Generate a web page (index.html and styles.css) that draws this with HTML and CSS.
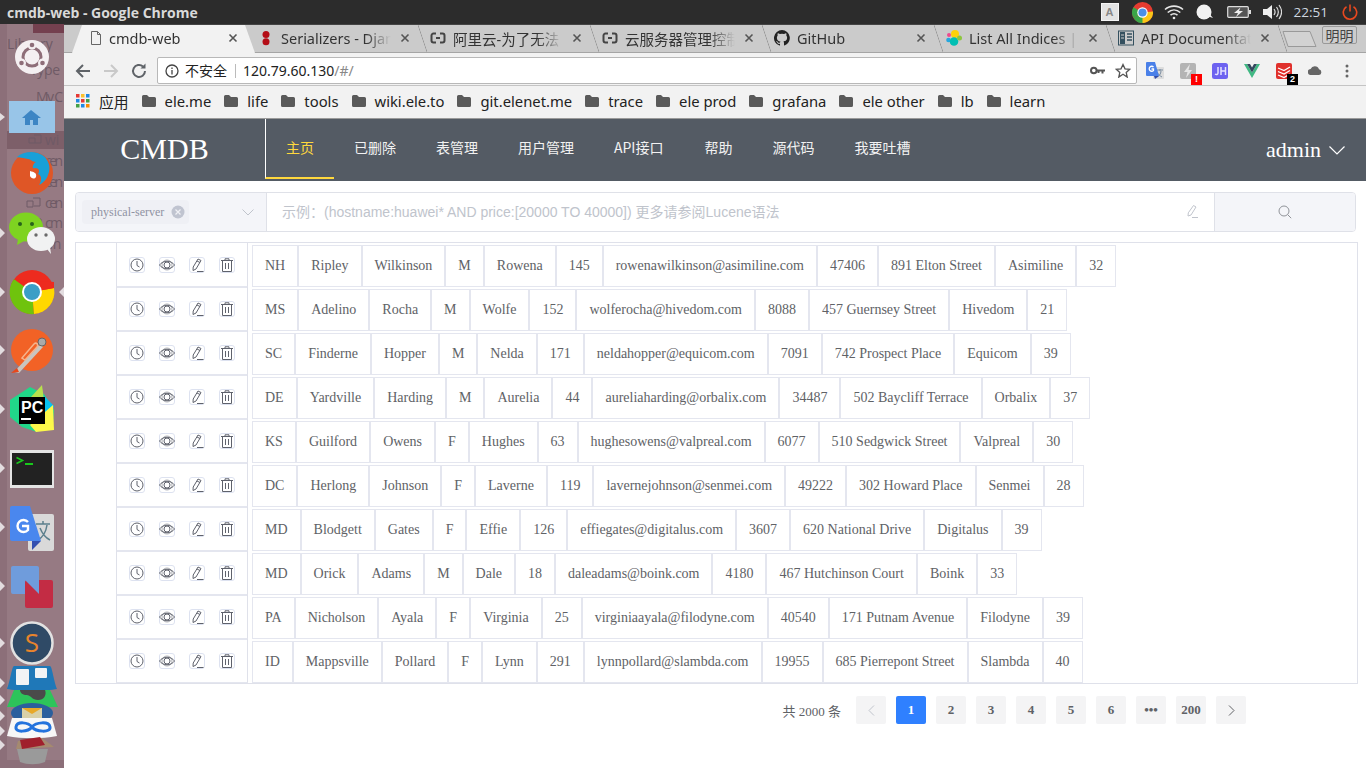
FILE: index.html
```html
<!DOCTYPE html>
<html lang="en">
<head>
    <meta charset="UTF-8">
    <meta name="viewport" content="width=device-width, initial-scale=1.0">
    <title>cmdb-web</title>
    <link rel="stylesheet" href="styles.css">
</head>
<body>
    <div class="panel">
        <div class="panel-title">cmdb-web - Google Chrome</div>
        <div class="tray">
            <span class="tray-a">A</span>
            <svg class="tray-chrome" width="21" height="21" viewBox="0 0 44 44"><circle cx="22" cy="22" r="22" fill="#e53b30"/><path d="M22 22 3 33A22 22 0 0 1 3 11Z" fill="#3aa648"/><path d="M22 22 3 33A22 22 0 0 0 25 44L44 22Z" fill="#3aa648"/><path d="M22 22 44 20A22 22 0 0 1 22 44Z" fill="#fbc518"/><circle cx="22" cy="22" r="11" fill="#fff"/><circle cx="22" cy="22" r="8.5" fill="#4a8fe8"/></svg>
            <svg class="tray-wifi" width="20" height="16" viewBox="0 0 20 16" fill="none" stroke="#e6e6e6" stroke-width="1.6"><path d="M1 5.5C6 1 14 1 19 5.500"/><path d="M3.700 8.500C7.500 5.200 12.500 5.200 16.300 8.500"/><path d="M6.500 11.200C8.600 9.500 11.400 9.500 13.500 11.200"/><circle cx="10" cy="14" r="1.300" fill="#e6e6e6" stroke="none"/></svg>
            <svg class="tray-chat" width="18" height="16" viewBox="0 0 18 16"><circle cx="8" cy="8" r="7.500" fill="#f2f2f2"/><path d="M11 12l6 2-5-6z" fill="#f2f2f2"/></svg>
            <svg class="tray-battery" width="24" height="14" viewBox="0 0 24 14"><rect x=".7" y="1.700" width="20.600" height="10.600" rx="1" fill="#555" stroke="#ddd" stroke-width="1.200"/><rect x="22" y="5" width="2" height="4" fill="#ddd"/><path d="M13.500 2.500 7 8h4l-2 4 7-6h-4z" fill="#eee"/></svg>
            <svg class="tray-volume" width="19" height="16" viewBox="0 0 19 16" fill="none"><path d="M0 5h4l5-4v14l-5-4H0z" fill="#eee"/><path d="M11 5c1.300 1.800 1.300 4.200 0 6M13.500 3c2.200 3 2.200 7 0 10M16 1c3.200 4.300 3.200 9.700 0 14" stroke="#ddd" stroke-width="1.200"/></svg>
            <span class="tray-clock">22:51</span>
            <svg class="tray-power" width="16" height="16" viewBox="0 0 16 16" fill="none" stroke="#e8481f" stroke-width="1.600"><path d="M8 .5v7"/><path d="M4.500 2.800a6.700 6.700 0 1 0 7 0"/></svg>
        </div>
    </div>

    <div class="desktop">
        <svg class="dock" width="64" height="744" viewBox="0 24 64 744">
            <rect x="0" y="24" width="64" height="744" fill="#967a83"/>
            <rect x="0" y="24" width="7" height="744" fill="#8c6f79"/>
            <rect x="33" y="24" width="31" height="9" fill="#74404f"/>
            <rect x="7" y="131" width="57" height="18" fill="#7d5f69"/>
            <rect x="0" y="760" width="64" height="8" fill="#8c6f79"/>
            <g class="dock-ghost">
                <text x="7" y="49">Library</text>
                <text x="30" y="75" textLength="30">Type</text>
                <text x="36" y="102" textLength="27">My C</text>
                <text x="45" y="145">wi</text>
                <text x="45" y="166" textLength="18">cen</text>
                <text x="45" y="187" textLength="18">cen</text>
                <text x="45" y="208" textLength="18">cen</text>
                <text x="45" y="228" textLength="18">cm</text>
                <text x="45" y="249">an</text>
            </g>
            <g fill="none" stroke="#6f5a66">
                <path d="M29 138h6v5h-6zM34 135h7v8h-6M33 156h5v5M29 160h5v6h-5zM35 160h6v6h-6M29 181h5v6h-5zM35 181h6v6h-6M27 201h6v6h-6zM33 198h7v8h-6M30 222h5v6h-5zM35 219h6v8"/>
            </g>
            <path d="M0 113l5 4-5 4zM0 228l5 5-5 5zM0 287l5 5-5 5zM0 345l5 5-5 5zM0 404l5 5-5 5zM0 463l5 5-5 5zM0 522l5 5-5 5zM0 581l5 5-5 5zM0 638l5 5-5 5zM0 678l5 5-5 5zM0 695l5 5-5 5zM0 711l5 5-5 5zM0 726l5 5-5 5zM0 740l5 5-5 5zM64 287l-5 5 5 5z" fill="#e3dde0"/>

            <circle cx="32" cy="57" r="17" fill="#f4eff1"/>
            <circle cx="32" cy="57" r="9" fill="none" stroke="#8e6d78" stroke-width="3"/>
            <g fill="#f4eff1"><circle cx="32" cy="45" r="4.500"/><circle cx="21.500" cy="63" r="4.500"/><circle cx="42.500" cy="63" r="4.500"/></g>
            <g fill="#8e6d78"><circle cx="32" cy="45" r="2.300"/><circle cx="21.500" cy="63" r="2.300"/><circle cx="42.500" cy="63" r="2.300"/></g>

            <rect x="9" y="101" width="46" height="32" fill="#98c5e8"/>
            <path d="M31 110l-9 8h3v7h5v-5h3v5h5v-7h3z" fill="#3c85c4"/>

            <circle cx="32" cy="173" r="21" fill="#df5626"/>
            <path d="M17 157c7-6 20-7 28 0 4 5 6 11 3 18-1 4-5 8-9 10 3-5 3-9-1-11 2-3 1-6-3-6-4 2-2-5 1-6-4 0-5-3-8-3-3-1-7-1-11-2z" fill="#18a0d8"/>
            <path d="M30 171c4 1 7 2 6 6-2 3-5 1-6-1z" fill="#fff"/>

            <ellipse cx="26" cy="227" rx="17" ry="14.500" fill="#7ed321"/>
            <path d="M18 239l-1 6 7-4z" fill="#7ed321"/>
            <circle cx="20" cy="224" r="2" fill="#27631b"/><circle cx="32" cy="224" r="2" fill="#27631b"/>
            <ellipse cx="41" cy="239" rx="14" ry="12" fill="#f1f2f2"/>
            <path d="M47 249l4 5-1-7z" fill="#f1f2f2"/>
            <circle cx="36" cy="235" r="1.700" fill="#6a6a6a"/><circle cx="46" cy="235" r="1.700" fill="#6a6a6a"/>

            <circle cx="32" cy="292" r="22" fill="#ed2b1f"/>
            <path d="M32 292 14 279A22 22 0 0 0 34 314Z" fill="#6fc30d"/>
            <path d="M32 292 54 288A22 22 0 0 1 34 314Z" fill="#ffd800"/>
            <path d="M14 279 32 292 54 288 54 282 40 281Z" fill="#ed2b1f"/>
            <circle cx="32" cy="292" r="10" fill="#fff"/><circle cx="32" cy="292" r="8" fill="#3b9ec6"/>

            <circle cx="32" cy="350" r="21" fill="#f26226"/>
            <path d="M14 372l26-28 3 3-24 26z" fill="#c9c5bf"/>
            <path d="M22 358l12-14c2-2 5 0 3 3l-12 13z" fill="none" stroke="#f5b38b" stroke-width="1.500"/>
            <circle cx="42" cy="342" r="4" fill="#aaa" stroke="#666"/>
            <path d="M11 373l6-5 2 4z" fill="#e8471b"/>

            <path d="M10 400l20-13 14 7 10 16-1 12-16 10-15-5-12-10z" fill="#21d789"/>
            <path d="M42 394l12 12-4 10-8-6z" fill="#07c3f2"/>
            <path d="M30 425l23-20 1 25-18 2z" fill="#fcf84a"/>
            <path d="M42 385l2 15-13-3z" fill="#b8e04d"/>
            <rect x="19" y="397" width="26" height="27" fill="#000"/>
            <text class="dock-pc" x="21" y="413">PC</text>
            <rect x="21" y="418" width="10" height="2" fill="#fff"/>

            <rect x="10" y="450" width="44" height="38" fill="#e4e4e4"/>
            <rect x="12" y="453" width="40" height="32" fill="#222"/>
            <path d="M16.500 457.500l6 3-6 3" fill="none" stroke="#19c81c" stroke-width="1.600"/>
            <rect x="25" y="463" width="8" height="2" fill="#19c81c"/>

            <rect x="28" y="514" width="26" height="37" rx="2" fill="#d9d9d9"/>
            <path d="M36 524h14M43 521v3M38 540c5-3 8-8 9-15M40 528c2 5 6 10 10 12" fill="none" stroke="#5b7f8c" stroke-width="1.500"/>
            <path d="M12 506h18l11 35H12a2 2 0 0 1-2-2v-31a2 2 0 0 1 2-2z" fill="#4a87ee"/>
            <path d="M32 541h9l-9 9z" fill="#3450b0"/>
            <path d="M28 522a6 6 0 1 0 0 8v-4h-6" fill="none" stroke="#fff" stroke-width="2.400"/>

            <rect x="11" y="566" width="28" height="28" rx="2" fill="#6f9cdc"/>
            <rect x="25" y="580" width="28" height="28" rx="2" fill="#c32c44"/>
            <path d="M25 580l14 14v-14h-14z" fill="#6f9cdc"/>

            <circle cx="32" cy="643" r="20.500" fill="#2f4a66" stroke="#e2e2e2" stroke-width="2.500"/>
            <text class="dock-s" x="32" y="652">S</text>

            <path d="M14 666h36c2 0 4 16 7 23-10 2-40 2-50 0 3-7 5-23 7-23z" fill="#1f78b8"/>
            <rect x="16" y="669" width="13" height="16" rx="1" fill="#f1f3f5"/>
            <rect x="35" y="668" width="12" height="10" rx="1" fill="#f1f3f5"/>
            <path d="M14 690h36l8 17H7z" fill="#2dc45a"/>
            <path d="M20 690h25c2 5-1 10-7 10s-6-4-11-5c-4 0-7-2-7-5z" fill="#4a4a4a"/>
            <ellipse cx="32" cy="713" rx="21" ry="10" fill="#2b5f9d"/>
            <rect x="22" y="708" width="20" height="13" fill="#d8d0a8"/>
            <path d="M22 708l10 6 10-6" fill="#e8a828"/>
            <path d="M12 718h40l5 18c-15 3-35 3-50 0z" fill="#f7f7f7"/>
            <path d="M32 727c-4-5-15-6-16 0s12 5 16 0c4-5 17-6 18 0s-14 5-18 0z" fill="none" stroke="#2473dd" stroke-width="3"/>
            <path d="M18 741l24-3 12 9-38 2z" fill="#a58a6f"/>
            <path d="M20 740l20-3 5 8-23 4z" fill="#a0202c"/>
            <path d="M17 749h31l-3 13c-8 3-17 3-25 0z" fill="#9a9a9a"/>
        </svg>

        <div class="chrome">
            <div class="tabs">
                <div class="tab tab-active">
                    <svg class="tab-icon" width="16" height="16" viewBox="0 0 16 16" fill="none" stroke="#666"><path d="M3.500 1.500h6l3 3v10h-9z"/><path d="M9.500 1.500v3h3"/></svg>
                    <span class="tab-title">cmdb-web</span>
                    <svg class="tab-close" width="14" height="14" viewBox="0 0 14 14"><path d="M3.500 3.500l7 7M10.500 3.500l-7 7" stroke="#555" stroke-width="1.600"/></svg>
                </div>
                <div class="tab">
                    <svg class="tab-icon" width="16" height="16" viewBox="0 0 16 16" fill="#b40d16"><circle cx="8" cy="4.500" r="3.500"/><circle cx="8" cy="11.800" r="3.500"/></svg>
                    <span class="tab-title">Serializers - Djan</span>
                    <svg class="tab-close" width="14" height="14" viewBox="0 0 14 14"><path d="M3.500 3.500l7 7M10.500 3.500l-7 7" stroke="#555" stroke-width="1.600"/></svg>
                </div>
                <div class="tab">
                    <svg class="tab-icon" width="16" height="16" viewBox="0 0 16 16" fill="none" stroke="#444" stroke-width="2"><path d="M6 3.500H3.500a2 2 0 0 0-2 2v5a2 2 0 0 0 2 2H6M10 3.500h2.500a2 2 0 0 1 2 2v5a2 2 0 0 1-2 2H10M6 8h4"/></svg>
                    <span class="tab-title">阿里云-为了无法</span>
                    <svg class="tab-close" width="14" height="14" viewBox="0 0 14 14"><path d="M3.500 3.500l7 7M10.500 3.500l-7 7" stroke="#555" stroke-width="1.600"/></svg>
                </div>
                <div class="tab">
                    <svg class="tab-icon" width="16" height="16" viewBox="0 0 16 16" fill="none" stroke="#444" stroke-width="2"><path d="M6 3.500H3.500a2 2 0 0 0-2 2v5a2 2 0 0 0 2 2H6M10 3.500h2.500a2 2 0 0 1 2 2v5a2 2 0 0 1-2 2H10M6 8h4"/></svg>
                    <span class="tab-title">云服务器管理控制</span>
                    <svg class="tab-close" width="14" height="14" viewBox="0 0 14 14"><path d="M3.500 3.500l7 7M10.500 3.500l-7 7" stroke="#555" stroke-width="1.600"/></svg>
                </div>
                <div class="tab">
                    <svg class="tab-icon" width="16" height="16" viewBox="0 0 16 16" fill="#222"><path d="M8 0a8 8 0 0 0-2.500 15.600c.4.100.5-.2.500-.4v-1.400c-2.200.5-2.700-1-2.700-1-.4-.9-.9-1.200-.9-1.200-.7-.5.100-.5.100-.5.800.1 1.200.8 1.200.8.700 1.200 1.900.9 2.300.7.100-.5.300-.9.500-1.100-1.800-.2-3.600-.9-3.600-4 0-.9.300-1.600.8-2.100-.1-.2-.4-1 .1-2.100 0 0 .7-.2 2.200.8a7.500 7.500 0 0 1 4 0c1.500-1 2.200-.8 2.200-.8.400 1.100.2 1.900.1 2.100.5.600.8 1.300.8 2.100 0 3.100-1.900 3.700-3.700 3.900.3.300.6.800.6 1.500v2.200c0 .2.100.5.600.4A8 8 0 0 0 8 0z"/></svg>
                    <span class="tab-title">GitHub</span>
                    <svg class="tab-close" width="14" height="14" viewBox="0 0 14 14"><path d="M3.500 3.500l7 7M10.500 3.500l-7 7" stroke="#555" stroke-width="1.600"/></svg>
                </div>
                <div class="tab">
                    <svg class="tab-icon" width="16" height="16" viewBox="0 0 16 16"><circle cx="9" cy="4" r="4" fill="#fdd10a"/><circle cx="3" cy="5" r="2" fill="#ef4a8e"/><circle cx="2.500" cy="10" r="2.300" fill="#27a6e0"/><circle cx="8" cy="11.500" r="4.300" fill="#00bfb3"/><circle cx="13.500" cy="8" r="2.500" fill="#8dc63f"/></svg>
                    <span class="tab-title">List All Indices |</span>
                    <svg class="tab-close" width="14" height="14" viewBox="0 0 14 14"><path d="M3.500 3.500l7 7M10.500 3.500l-7 7" stroke="#555" stroke-width="1.600"/></svg>
                </div>
                <div class="tab">
                    <svg class="tab-icon" width="16" height="16" viewBox="0 0 16 16"><rect x=".5" y="1" width="15" height="14" fill="none" stroke="#34505f"/><rect x="2" y="2" width="5" height="12" fill="#34505f"/><path d="M9 4h5M9 7h5M9 10h5" stroke="#34505f" stroke-width="1.500"/><path d="M3 5h3M3 8h3" stroke="#cbcbcb"/></svg>
                    <span class="tab-title">API Documentat</span>
                    <svg class="tab-close" width="14" height="14" viewBox="0 0 14 14"><path d="M3.500 3.500l7 7M10.500 3.500l-7 7" stroke="#555" stroke-width="1.600"/></svg>
                </div>
                <svg class="tab-new" width="36" height="18" viewBox="0 0 36 18"><path d="M1 1.500h27l6 15H6z" fill="#d2d2d2" stroke="#999"/></svg>
                <span class="frame-user">明明</span>
            </div>

            <div class="toolbar">
                <svg class="tool" width="18" height="18" viewBox="0 0 18 18" fill="none" stroke="#5f6368" stroke-width="2"><path d="M16 9H3M9 3L3 9l6 6"/></svg>
                <svg class="tool" width="18" height="18" viewBox="0 0 18 18" fill="none" stroke="#c9c9c9" stroke-width="2"><path d="M2 9h13M9 3l6 6-6 6"/></svg>
                <svg class="tool" width="18" height="18" viewBox="0 0 18 18" fill="none" stroke="#5f6368" stroke-width="2"><path d="M15 9a6 6 0 1 1-2-4.500"/><path d="M15.500 1.500v5h-5z" fill="#5f6368" stroke="none"/></svg>
                <div class="omnibox">
                    <svg width="14" height="14" viewBox="0 0 14 14" fill="none" stroke="#444" stroke-width="1.300"><circle cx="7" cy="7" r="6"/><path d="M7 6v4.500M7 3.500v1.500"/></svg>
                    <span class="omni-secure">不安全</span>
                    <span class="omni-url">120.79.60.130<span class="omni-path">/#/</span></span>
                    <svg class="omni-key" width="15" height="9" viewBox="0 0 15 9"><circle cx="3.800" cy="4.500" r="2.800" fill="none" stroke="#555" stroke-width="2"/><path d="M6 3.500h9v2h-1.500v2h-2v-2H9.500v1.500h-2V5.500H6z" fill="#555"/></svg>
                    <svg width="16" height="15" viewBox="0 0 16 15" fill="none" stroke="#555" stroke-width="1.300"><path d="M8 1.500l2 4.300 4.700.5-3.500 3.200 1 4.600L8 11.300l-4.200 2.800 1-4.600-3.500-3.200 4.700-.5z"/></svg>
                </div>
                <div class="extensions">
                    <svg width="18" height="18" viewBox="0 0 18 18"><rect x="7" y="5" width="11" height="12" rx="1" fill="#ddd"/><path d="M10 8h7M14 7v2M11 15c2-1 4-3 4-6M11 10c1 2 3 4 5 5" fill="none" stroke="#7a8ca0"/><path d="M1 0h8l4 14H1a1 1 0 0 1-1-1V1a1 1 0 0 1 1-1z" fill="#4a80e8"/><path d="M8 14h5l-4 3z" fill="#2f49a8"/><path d="M7.500 5a2.500 2.500 0 1 0 0 3.500V7H5.500" fill="none" stroke="#fff" stroke-width="1.300"/></svg>
                    <span class="ext-badged">
                        <svg width="16" height="16" viewBox="0 0 16 16"><rect width="16" height="16" rx="2" fill="#b4b4b4"/><path d="M10 1 4 9h3.500L6 15l6-8H8.500z" fill="#e6e6e6"/></svg>
                        <span class="badge badge-red">!</span>
                    </span>
                    <svg width="16" height="16" viewBox="0 0 16 16"><rect width="16" height="16" rx="2.500" fill="#6d62f0"/><path d="M6 4v6c0 1.500-1.500 2-3 1M9 4v8M13.500 4v8M9 8h4.500" fill="none" stroke="#e4e2ff" stroke-width="1.500"/></svg>
                    <svg width="16" height="14" viewBox="0 0 16 14"><path d="M0 0h3l5 8.500L13 0h3L8 14z" fill="#41b883"/><path d="M3 0h3l2 3.500L10 0h3L8 8.500z" fill="#34495e"/></svg>
                    <span class="ext-badged">
                        <svg width="16" height="16" viewBox="0 0 16 16"><rect width="16" height="16" rx="2" fill="#e0302c"/><path d="M2 5l6 2.500L14 4M2 8.500l6 2.500 6-3.500M2 12l6 2.500L14 11" fill="none" stroke="#fff" stroke-width="1.300"/></svg>
                        <span class="badge badge-black">2</span>
                    </span>
                    <svg width="14" height="9" viewBox="0 0 14 9"><path d="M3 9a3 3 0 0 1-.4-6A4.500 4.500 0 0 1 11 3.300 2.900 2.900 0 0 1 11 9z" fill="#666"/></svg>
                    <svg class="ext-menu" width="4" height="14" viewBox="0 0 4 14" fill="#666"><circle cx="2" cy="2" r="1.500"/><circle cx="2" cy="7" r="1.500"/><circle cx="2" cy="12" r="1.500"/></svg>
                </div>
            </div>

            <div class="bookmarks">
                <svg class="apps-grid" width="14" height="14" viewBox="0 0 14 14"><path fill="#e53935" d="M0 0h3.500v3.500H0z"/><path fill="#fbc02d" d="M5 0h3.500v3.500H5z"/><path fill="#1e88e5" d="M10 0h3.500v3.500H10z"/><path fill="#1e88e5" d="M0 5h3.500v3.500H0z"/><path fill="#e53935" d="M5 5h3.500v3.500H5z"/><path fill="#43a047" d="M10 5h3.500v3.500H10z"/><path fill="#43a047" d="M0 10h3.500v3.500H0z"/><path fill="#1e88e5" d="M5 10h3.500v3.500H5z"/><path fill="#fb8c00" d="M10 10h3.500v3.500H10z"/></svg>
                <span class="bm-apps">应用</span>
                <span class="bm"><svg width="14" height="12" viewBox="0 0 14 12"><path d="M0 1.500A1.500 1.500 0 0 1 1.500 0H5l2 2h5.500A1.500 1.500 0 0 1 14 3.500v7a1.500 1.500 0 0 1-1.500 1.500h-11A1.500 1.500 0 0 1 0 10.500z" fill="#5a5a5a"/></svg>ele.me</span>
                <span class="bm"><svg width="14" height="12" viewBox="0 0 14 12"><path d="M0 1.500A1.500 1.500 0 0 1 1.500 0H5l2 2h5.500A1.500 1.500 0 0 1 14 3.500v7a1.500 1.500 0 0 1-1.500 1.500h-11A1.500 1.500 0 0 1 0 10.500z" fill="#5a5a5a"/></svg>life</span>
                <span class="bm"><svg width="14" height="12" viewBox="0 0 14 12"><path d="M0 1.500A1.500 1.500 0 0 1 1.500 0H5l2 2h5.500A1.500 1.500 0 0 1 14 3.500v7a1.500 1.500 0 0 1-1.500 1.500h-11A1.500 1.500 0 0 1 0 10.500z" fill="#5a5a5a"/></svg>tools</span>
                <span class="bm"><svg width="14" height="12" viewBox="0 0 14 12"><path d="M0 1.500A1.500 1.500 0 0 1 1.500 0H5l2 2h5.500A1.500 1.500 0 0 1 14 3.500v7a1.500 1.500 0 0 1-1.500 1.500h-11A1.500 1.500 0 0 1 0 10.500z" fill="#5a5a5a"/></svg>wiki.ele.to</span>
                <span class="bm"><svg width="14" height="12" viewBox="0 0 14 12"><path d="M0 1.500A1.500 1.500 0 0 1 1.500 0H5l2 2h5.500A1.500 1.500 0 0 1 14 3.500v7a1.500 1.500 0 0 1-1.500 1.500h-11A1.500 1.500 0 0 1 0 10.500z" fill="#5a5a5a"/></svg>git.elenet.me</span>
                <span class="bm"><svg width="14" height="12" viewBox="0 0 14 12"><path d="M0 1.500A1.500 1.500 0 0 1 1.500 0H5l2 2h5.500A1.500 1.500 0 0 1 14 3.500v7a1.500 1.500 0 0 1-1.500 1.500h-11A1.500 1.500 0 0 1 0 10.500z" fill="#5a5a5a"/></svg>trace</span>
                <span class="bm"><svg width="14" height="12" viewBox="0 0 14 12"><path d="M0 1.500A1.500 1.500 0 0 1 1.500 0H5l2 2h5.500A1.500 1.500 0 0 1 14 3.500v7a1.500 1.500 0 0 1-1.500 1.500h-11A1.500 1.500 0 0 1 0 10.500z" fill="#5a5a5a"/></svg>ele prod</span>
                <span class="bm"><svg width="14" height="12" viewBox="0 0 14 12"><path d="M0 1.500A1.500 1.500 0 0 1 1.500 0H5l2 2h5.500A1.500 1.500 0 0 1 14 3.500v7a1.500 1.500 0 0 1-1.500 1.500h-11A1.500 1.500 0 0 1 0 10.500z" fill="#5a5a5a"/></svg>grafana</span>
                <span class="bm"><svg width="14" height="12" viewBox="0 0 14 12"><path d="M0 1.500A1.500 1.500 0 0 1 1.500 0H5l2 2h5.500A1.500 1.500 0 0 1 14 3.500v7a1.500 1.500 0 0 1-1.500 1.500h-11A1.500 1.500 0 0 1 0 10.500z" fill="#5a5a5a"/></svg>ele other</span>
                <span class="bm"><svg width="14" height="12" viewBox="0 0 14 12"><path d="M0 1.500A1.500 1.500 0 0 1 1.500 0H5l2 2h5.500A1.500 1.500 0 0 1 14 3.500v7a1.500 1.500 0 0 1-1.500 1.500h-11A1.500 1.500 0 0 1 0 10.500z" fill="#5a5a5a"/></svg>lb</span>
                <span class="bm"><svg width="14" height="12" viewBox="0 0 14 12"><path d="M0 1.500A1.500 1.500 0 0 1 1.500 0H5l2 2h5.500A1.500 1.500 0 0 1 14 3.500v7a1.500 1.500 0 0 1-1.500 1.500h-11A1.500 1.500 0 0 1 0 10.500z" fill="#5a5a5a"/></svg>learn</span>
            </div>

            <div class="page">
                <header class="site-header">
                    <div class="logo">CMDB</div>
                    <nav class="nav">
                        <a class="nav-item nav-active">主页</a>
                        <a class="nav-item">已删除</a>
                        <a class="nav-item">表管理</a>
                        <a class="nav-item">用户管理</a>
                        <a class="nav-item nav-api">API接口</a>
                        <a class="nav-item">帮助</a>
                        <a class="nav-item">源代码</a>
                        <a class="nav-item">我要吐槽</a>
                    </nav>
                    <div class="user">admin
                        <svg width="16" height="9" viewBox="0 0 16 9" fill="none" stroke="#fff" stroke-width="1.200"><path d="M.5.5L8 8 15.500.5"/></svg>
                    </div>
                </header>

                <div class="search">
                    <div class="search-select">
                        <span class="search-tag">physical-server
                            <svg width="14" height="14" viewBox="0 0 14 14"><circle cx="7" cy="7" r="6.500" fill="#c0c4d0"/><path d="M4.500 4.500l5 5M9.500 4.500l-5 5" stroke="#f0f1f5" stroke-width="1.200"/></svg>
                        </span>
                        <svg class="search-arrow" width="12" height="7" viewBox="0 0 12 7" fill="none" stroke="#c0c4cc"><path d="M.5.500L6 6 11.500.5"/></svg>
                    </div>
                    <div class="search-input">
                        <span class="search-hint">示例：(hostname:huawei* AND price:[20000 TO 40000]) 更多请参阅Lucene语法</span>
                        <svg width="14" height="14" viewBox="0 0 14 14" fill="none" stroke="#c0c4cc"><path d="M8.500 1.500l2.500 1.500-5 8-3 1 .3-3.200zM7 13.500h6"/></svg>
                    </div>
                    <div class="search-btn">
                        <svg width="14" height="14" viewBox="0 0 14 14" fill="none" stroke="#909399"><circle cx="6" cy="6" r="5"/><path d="M9.700 9.700l3.500 3.500"/></svg>
                    </div>
                </div>

                <div class="table" id="table"></div>

                <div class="pager">
                    <span class="pager-total">共 2000 条</span>
                    <span class="pager-btn pager-off"><svg width="7" height="11" viewBox="0 0 7 11" fill="none" stroke="#c0c4cc"><path d="M6 .5l-5 5 5 5"/></svg></span>
                    <span class="pager-btn pager-on">1</span>
                    <span class="pager-btn">2</span>
                    <span class="pager-btn">3</span>
                    <span class="pager-btn">4</span>
                    <span class="pager-btn">5</span>
                    <span class="pager-btn">6</span>
                    <span class="pager-btn">•••</span>
                    <span class="pager-btn">200</span>
                    <span class="pager-btn"><svg width="7" height="11" viewBox="0 0 7 11" fill="none" stroke="#606266"><path d="M1 .5l5 5-5 5"/></svg></span>
                </div>
            </div>
        </div>
    </div>

    <script>
        var rows = [
            ['NH','Ripley','Wilkinson','M','Rowena','145','rowenawilkinson@asimiline.com','47406','891 Elton Street','Asimiline','32'],
            ['MS','Adelino','Rocha','M','Wolfe','152','wolferocha@hivedom.com','8088','457 Guernsey Street','Hivedom','21'],
            ['SC','Finderne','Hopper','M','Nelda','171','neldahopper@equicom.com','7091','742 Prospect Place','Equicom','39'],
            ['DE','Yardville','Harding','M','Aurelia','44','aureliaharding@orbalix.com','34487','502 Baycliff Terrace','Orbalix','37'],
            ['KS','Guilford','Owens','F','Hughes','63','hughesowens@valpreal.com','6077','510 Sedgwick Street','Valpreal','30'],
            ['DC','Herlong','Johnson','F','Laverne','119','lavernejohnson@senmei.com','49222','302 Howard Place','Senmei','28'],
            ['MD','Blodgett','Gates','F','Effie','126','effiegates@digitalus.com','3607','620 National Drive','Digitalus','39'],
            ['MD','Orick','Adams','M','Dale','18','daleadams@boink.com','4180','467 Hutchinson Court','Boink','33'],
            ['PA','Nicholson','Ayala','F','Virginia','25','virginiaayala@filodyne.com','40540','171 Putnam Avenue','Filodyne','39'],
            ['ID','Mappsville','Pollard','F','Lynn','291','lynnpollard@slambda.com','19955','685 Pierrepont Street','Slambda','40']
        ];
        var actions = '<div class="row-actions">' +
            '<span class="act"><svg width="14" height="14" viewBox="0 0 14 14"><circle cx="7" cy="7" r="6"/><path d="M7 3v4.500l2.500 1.500"/></svg></span>' +
            '<span class="act"><svg width="16" height="14" viewBox="0 0 16 14"><path d="M.5 7C4 2 12 2 15.500 7 12 12 4 12 .5 7z"/><circle cx="8" cy="7" r="3"/><circle cx="8" cy="7" r="5" stroke-width=".5"/></svg></span>' +
            '<span class="act"><svg width="14" height="14" viewBox="0 0 14 14"><path d="M8 1l3 1.500-5 8.500-3 1.500.2-3.500zM7 3l3 1.500M7 13.500h6.500"/></svg></span>' +
            '<span class="act"><svg width="14" height="14" viewBox="0 0 14 14"><path d="M1 2.500h12M5 2.500V.8h4v1.700M2.500 2.500v11h9v-11M5.500 5v6M8.500 5v6"/></svg></span>' +
            '</div>';
        document.getElementById('table').innerHTML = rows.map(function (row) {
            var cells = row.map(function (c) { return '<span class="cell">' + c + '</span>'; }).join('');
            return '<div class="row"><div class="row-gutter"></div>' + actions + '<div class="row-cells">' + cells + '</div></div>';
        }).join('');
    </script>
</body>
</html>
```

FILE: styles.css
```css
* {
    box-sizing: border-box;
}

html, body {
    margin: 0;
    height: 100%;
    overflow: hidden;
}

body {
    display: flex;
    flex-direction: column;
    width: 1366px;
    height: 768px;
    background-color: #fff;
    font-family: "Liberation Serif", "Noto Sans CJK SC", serif;
}

/* ubuntu top bar */
.panel {
    display: flex;
    align-items: center;
    justify-content: space-between;
    height: 24px;
    flex: none;
    padding: 0 8px 0 7px;
    background-color: #2c2c2c;
}

.panel-title {
    font-family: "Open Sans", "Noto Sans", sans-serif;
    font-size: 14px;
    font-weight: 700;
    color: #d9d9d9;
}

.tray {
    display: flex;
    align-items: center;
}

.tray-a {
    display: flex;
    align-items: center;
    justify-content: center;
    width: 18px;
    height: 18px;
    background-color: #e3e3e3;
    border: 1px solid #f5f5f5;
    color: #888;
    font-family: "Liberation Sans", sans-serif;
    font-size: 11px;
    font-weight: 700;
}

.tray-chrome { margin-left: 13px; }
.tray-wifi { margin-left: 11px; }
.tray-chat { margin-left: 12px; }
.tray-battery { margin-left: 13px; }
.tray-volume { margin-left: 12px; }
.tray-power { margin-left: 14px; }

.tray-clock {
    margin-left: 12px;
    font-family: "Open Sans", sans-serif;
    font-size: 13.500px;
    color: #cfd8e0;
}

.desktop {
    display: flex;
    flex: 1;
    min-height: 0;
}

/* launcher */
.dock {
    display: block;
    flex: none;
}

.dock-ghost {
    font-family: "Open Sans", sans-serif;
    font-size: 14px;
    fill: #6f5a66;
}

.dock-pc {
    font-family: "Liberation Sans", sans-serif;
    font-size: 16px;
    font-weight: 700;
    fill: #fff;
}

.dock-s {
    font-family: "Open Sans", sans-serif;
    font-size: 26px;
    fill: #e8842c;
    text-anchor: middle;
}

.chrome {
    display: flex;
    flex-direction: column;
    flex: 1;
    min-width: 0;
}

/* tab strip */
.tabs {
    display: flex;
    align-items: stretch;
    height: 29px;
    flex: none;
    padding-left: 8px;
    background-color: #cbcbcb;
    border-top: 1px solid #444;
    border-bottom: 1px solid #a5a5a5;
    font-family: "Noto Sans", "Noto Sans CJK SC", sans-serif;
    font-size: 14.500px;
    color: #333;
}

.tab {
    position: relative;
    display: flex;
    align-items: center;
    width: 172px;
    flex: none;
    padding: 0 11px 1px 7px;
}

.tab::after {
    content: "";
    position: absolute;
    top: 0;
    right: -4px;
    width: 9px;
    height: 100%;
    background: linear-gradient(to bottom left, transparent calc(50% - 0.7px), #9a9a9a 50%, transparent calc(50% + 0.7px));
}

.tab-active {
    width: 183px;
    margin-right: -4px;
    padding: 0 15px 2px 16px;
    height: 28px;
    background-color: #f2f2f2;
    clip-path: polygon(10px 0, calc(100% - 10px) 0, 100% 100%, 0 100%);
    z-index: 1;
}

.tab-active::after {
    display: none;
}

.tab-icon {
    flex: none;
}

.tab-title {
    flex: 1;
    min-width: 0;
    margin-left: 7px;
    overflow: hidden;
    white-space: nowrap;
    -webkit-mask-image: linear-gradient(to right, #000 72%, transparent 94%);
    mask-image: linear-gradient(to right, #000 72%, transparent 94%);
}

.tab-active .tab-title {
    margin-left: 5px;
}

.tab-close {
    flex: none;
}

.tab-new {
    flex: none;
    align-self: center;
    margin: 0 0 0 -1px;
}

.frame-user {
    align-self: flex-start;
    display: flex;
    align-items: center;
    justify-content: center;
    width: 35px;
    height: 18px;
    margin: 1px 0 0 4px;
    background-color: #cdcdcd;
    border: 1px solid #999;
    border-radius: 2px;
    font-size: 14px;
    color: #444;
}

/* toolbar */
.toolbar {
    display: flex;
    align-items: center;
    height: 32px;
    flex: none;
    padding: 4px 0 1px 10px;
    background-color: #f2f2f2;
}

.tool {
    flex: none;
    margin-right: 10px;
}

.omnibox {
    display: flex;
    align-items: center;
    width: 980px;
    height: 27px;
    flex: none;
    margin-left: -1px;
    padding: 0 5px 0 7px;
    background-color: #fff;
    border: 1px solid #b8b8b8;
    border-radius: 2px;
    font-family: "Noto Sans", "Noto Sans CJK SC", sans-serif;
    font-size: 14px;
    color: #222;
}

.omni-secure {
    margin-left: 6px;
    padding-right: 8px;
    line-height: 14px;
    border-right: 1px solid #bbb;
}

.omni-url {
    flex: 1;
    margin-left: 7px;
}

.omni-path {
    color: #888;
}

.omni-key {
    margin-right: 10px;
}

.extensions {
    display: flex;
    align-items: center;
    gap: 16px;
    padding-left: 9px;
}

.ext-menu {
    margin-left: 7px;
}

.ext-badged {
    position: relative;
    display: flex;
}

.badge {
    position: absolute;
    right: -6px;
    bottom: -6px;
    width: 11px;
    height: 11px;
    color: #fff;
    font-family: "Liberation Sans", sans-serif;
    font-size: 9px;
    font-weight: 700;
    line-height: 11px;
    text-align: center;
}

.badge-red { background-color: #f00; }
.badge-black { background-color: #000; }

/* bookmarks */
.bookmarks {
    display: flex;
    align-items: center;
    height: 34px;
    flex: none;
    padding: 0 0 2px 12px;
    background-color: #f2f2f2;
    border-top: 1px solid #c4c4c4;
    border-bottom: 1px solid #9a9a9a;
    font-family: "Noto Sans", "Noto Sans CJK SC", sans-serif;
    font-size: 14.800px;
    color: #222;
}

.apps-grid {
    flex: none;
}

.bm-apps {
    margin-left: 9px;
    margin-right: 13px;
}

.bm {
    display: flex;
    align-items: center;
    gap: 9px;
    margin-right: 13px;
}

/* cmdb page */
.page {
    flex: 1;
    min-height: 0;
    background-color: #fff;
}

.site-header {
    display: flex;
    align-items: stretch;
    height: 62px;
    background-color: #545b64;
    color: #fff;
}

.logo {
    width: 201px;
    flex: none;
    font-size: 30px;
    line-height: 60px;
    text-align: center;
}

.nav {
    display: flex;
    flex: 1;
    align-items: flex-start;
    height: 60px;
    font-family: "Noto Sans CJK SC", sans-serif;
    font-size: 14px;
}

.nav-item {
    height: 60px;
    padding: 0 20px;
    line-height: 56px;
    color: #f2f2f2;
}

.nav-api {
    padding-right: 21px;
}

.nav-active {
    border-left: 1px solid #fff;
    border-bottom: 2px solid #ffd83d;
    color: #ffd83d;
}

.user {
    display: flex;
    align-items: center;
    gap: 8px;
    height: 62px;
    padding-right: 21px;
    font-size: 22px;
}

.search {
    display: flex;
    height: 40px;
    margin: 11px 10px 10px 11px;
    border: 1px solid #dfe1e8;
    border-radius: 4px;
    overflow: hidden;
    font-family: "Liberation Sans", "Noto Sans CJK SC", sans-serif;
}

.search-select {
    display: flex;
    align-items: center;
    justify-content: space-between;
    width: 191px;
    flex: none;
    padding: 0 12px 0 6px;
    background-color: #f4f5f9;
    border-right: 1px solid #dfe1e8;
}

.search-tag {
    display: flex;
    align-items: center;
    justify-content: space-between;
    width: 107px;
    height: 24px;
    padding: 0 4px 0 9px;
    background-color: #eff0f5;
    border-radius: 4px;
    font-family: "Liberation Serif", serif;
    font-size: 12px;
    color: #8f93a3;
}

.search-input {
    display: flex;
    align-items: center;
    justify-content: space-between;
    flex: 1;
    padding: 0 15px 2px;
    font-size: 14px;
    color: #c0c4cc;
    border-right: 1px solid #dfe1e8;
}

.search-btn {
    display: flex;
    align-items: center;
    justify-content: center;
    width: 140px;
    flex: none;
    background-color: #f4f5f9;
}

/* data table */
.table {
    height: 442px;
    margin: 0 8px 0 11px;
    border: 1px solid #dfe1ea;
    font-size: 14px;
    color: #606266;
}

.row {
    display: flex;
    height: 44px;
}

.row-gutter {
    width: 40px;
    flex: none;
}

.row-actions {
    display: flex;
    align-items: center;
    justify-content: space-between;
    width: 132px;
    height: 45px;
    flex: none;
    padding: 1px 12px 0;
    border-left: 1px solid #dfe1ea;
    border-right: 1px solid #dfe1ea;
    border-bottom: 2px solid #e4e6ef;
}

.row:last-child .row-actions {
    height: 44px;
    border-bottom-width: 1px;
}

.act {
    display: flex;
    align-items: center;
    justify-content: center;
    width: 16px;
    height: 16px;
    border: 1px solid #dde2f0;
    border-radius: 3px;
}

.act svg {
    flex: none;
    fill: none;
    stroke: #5f626c;
    stroke-width: 1;
}

.row-cells {
    display: flex;
    height: 42px;
    margin: 2px 0 0 4px;
}

.cell {
    display: flex;
    align-items: center;
    padding: 0 12px;
    border: 1px solid #e4e6ef;
    white-space: nowrap;
}

/* pagination */
.pager {
    display: flex;
    align-items: center;
    justify-content: flex-end;
    gap: 10px;
    margin-top: 12px;
    padding-right: 120px;
    font-size: 13px;
    color: #606266;
}

.pager-total {
    margin-right: 5px;
    font-weight: 400;
}

.pager-btn {
    display: flex;
    align-items: center;
    justify-content: center;
    width: 30px;
    height: 28px;
    background-color: #f4f4f5;
    border-radius: 2px;
    font-size: 13px;
    font-weight: 700;
}

.pager-on {
    background-color: #2f80ff;
    color: #fff;
}
```
